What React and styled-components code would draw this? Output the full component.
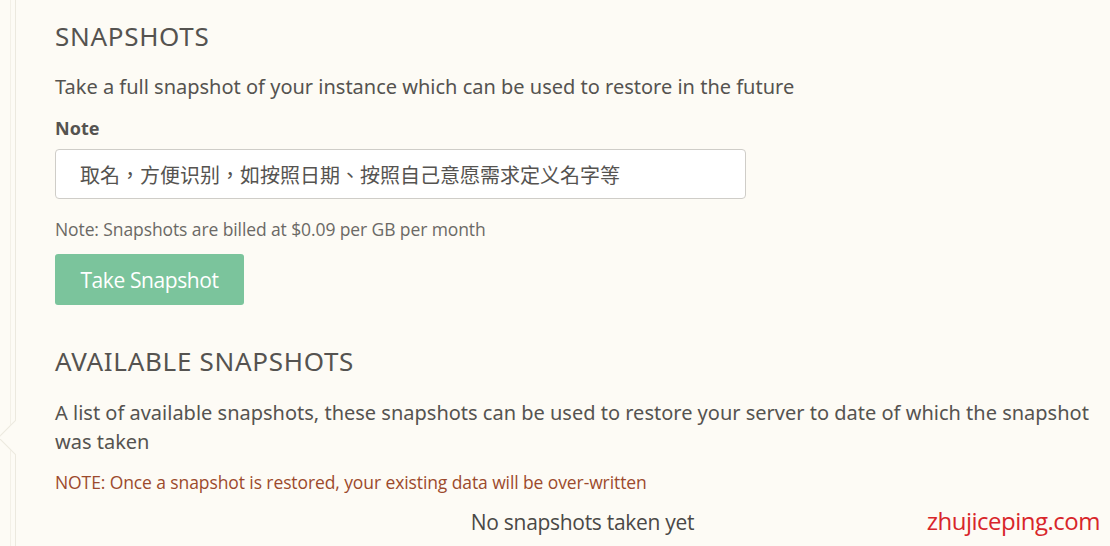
import React from "react";
import styled, { createGlobalStyle } from "styled-components";

const GlobalStyle = createGlobalStyle`
  html, body {
    margin: 0;
    padding: 0;
    background: #fdfbf5;
    overflow: hidden;
  }
`;

const Page = styled.div`
  position: relative;
  width: 1110px;
  height: 546px;
  background: #fdfbf5;
  overflow: hidden;
`;

const Panel = styled.div`
  position: relative;
  margin-left: 15px;
  height: 100%;
  border-left: 1px solid #ece9df;
  padding: 18px 0 0 39px;
  box-sizing: border-box;
  &:before {
    content: "";
    position: absolute;
    left: -6px;
    top: 0;
    bottom: 0;
    border-left: 1px solid #f3f0e7;
  }
`;

const Pointer = styled.div`
  position: absolute;
  left: -13px;
  top: 425px;
  width: 24px;
  height: 24px;
  background: #fdfbf5;
  border-left: 1px solid #ece9df;
  border-bottom: 1px solid #ece9df;
  transform: rotate(45deg);
`;

const Heading = styled.h2`
  margin: ${(p) => p.$margin || "0"};
  font-family: "Noto Sans", sans-serif;
  font-weight: 400;
  font-size: 26px;
  line-height: 36px;
  color: #555350;
  letter-spacing: 0.7px;
`;

const Text = styled.p`
  margin: ${(p) => p.$margin || "0"};
  font-family: "Noto Sans", sans-serif;
  font-size: 20px;
  line-height: 29px;
  color: #555350;
`;

const Label = styled.div`
  margin-top: 14px;
  font-family: "Noto Sans", sans-serif;
  font-weight: 700;
  font-size: 18px;
  line-height: 26px;
  color: #555350;
`;

const Input = styled.input`
  display: block;
  margin-top: 8px;
  width: 691px;
  height: 50px;
  box-sizing: border-box;
  border: 1px solid #cfcdc8;
  border-radius: 4px;
  background: #fff;
  padding: 0 24px;
  font-family: "Noto Sans CJK TC", sans-serif;
  font-size: 20px;
  color: #555;
  outline: none;
  &::placeholder {
    color: #555350;
  }
`;

const SmallNote = styled.div`
  margin-top: ${(p) => p.$top || "0"};
  font-family: "Open Sans", sans-serif;
  font-size: 17.5px;
  line-height: 22px;
  color: ${(p) => p.$color || "#6b6965"};
  letter-spacing: -0.1px;
`;

const Button = styled.button`
  display: block;
  margin-top: 14px;
  width: 189px;
  height: 51px;
  border: none;
  border-radius: 3px;
  background: #7bc49c;
  color: #fff;
  font-family: "Open Sans", sans-serif;
  font-size: 21px;
  letter-spacing: -0.4px;
  cursor: pointer;
`;

const Empty = styled.div`
  margin-top: 15px;
  text-align: center;
  font-family: "Open Sans", sans-serif;
  font-size: 21px;
  line-height: 28px;
  color: #4a4846;
  letter-spacing: -0.3px;
`;

const Watermark = styled.div`
  position: absolute;
  right: 10px;
  bottom: 9px;
  font-family: "Open Sans", sans-serif;
  font-size: 24px;
  color: #d8252a;
  letter-spacing: -0.5px;
`;

export default function App() {
  return (
    <Page>
      <GlobalStyle />
      <Panel>
        <Pointer />
        <Heading>SNAPSHOTS</Heading>
        <Text $margin="18px 0 0">
          Take a full snapshot of your instance which can be used to restore in the future
        </Text>
        <Label>Note</Label>
        <Input placeholder="取名，方便识别，如按照日期、按照自己意愿需求定义名字等" />
        <SmallNote $top="19px">Note: Snapshots are billed at $0.09 per GB per month</SmallNote>
        <Button>Take Snapshot</Button>
        <Heading $margin="38px 0 0">AVAILABLE SNAPSHOTS</Heading>
        <Text $margin="19px 0 0">
          A list of available snapshots, these snapshots can be used to restore your server to date of which the snapshot was taken
        </Text>
        <SmallNote $top="15px" $color="#9c4a2c">
          NOTE: Once a snapshot is restored, your existing data will be over-written
        </SmallNote>
        <Empty>No snapshots taken yet</Empty>
      </Panel>
      <Watermark>zhujiceping.com</Watermark>
    </Page>
  );
}
